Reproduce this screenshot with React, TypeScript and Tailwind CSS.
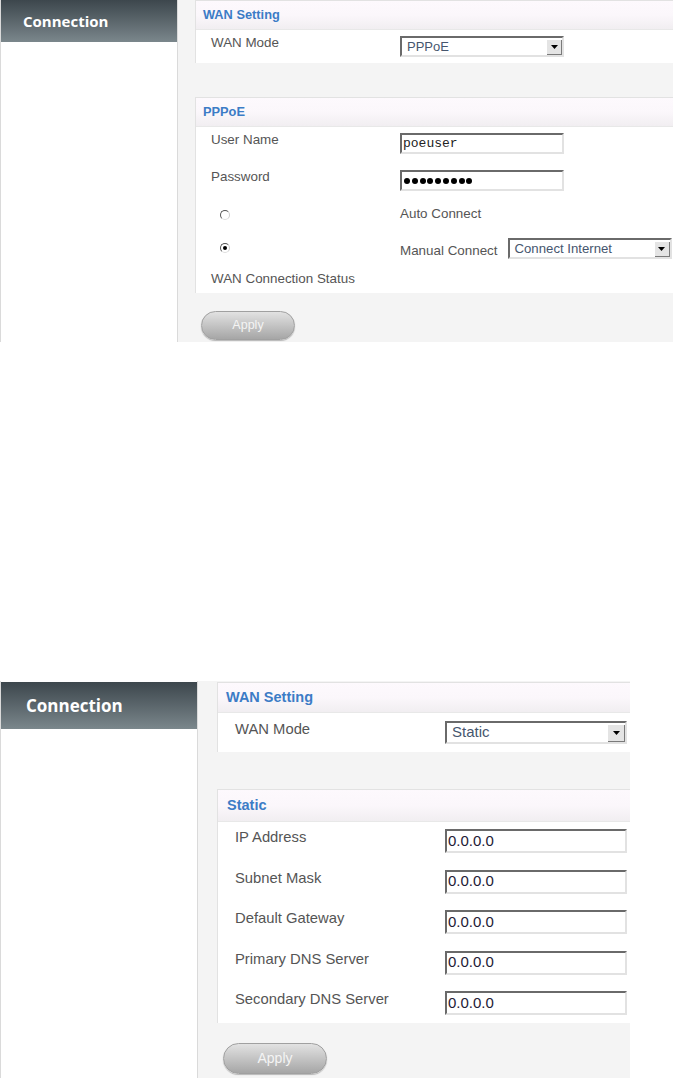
import React from "react";

const labelFont = { fontFamily: '"Liberation Sans", Arial, sans-serif' };

function Arrow({ size = 16, h = 17 }: { size?: number; h?: number }) {
  return (
    <div
      className="flex items-center justify-center border-l border-t border-white bg-[#e4e4e4] shadow-[inset_-1px_-1px_0_#7a7a7a]"
      style={{ width: size, height: h }}
    >
      <svg width="8" height="5" viewBox="0 0 8 5">
        <path d="M0 0 H7 L3.5 4 Z" fill="#000" />
      </svg>
    </div>
  );
}

function Select({ text, w, h, fs }: { text: string; w: number; h: number; fs: number }) {
  return (
    <div
      className="flex shrink-0 items-center justify-between border-2 border-t-[#6a6a6a] border-l-[#6a6a6a] border-b-[#e2e2e2] border-r-[#e2e2e2] bg-white"
      style={{ width: w, height: h }}
    >
      <span className="whitespace-nowrap pl-[5px] text-[#46566e]" style={{ ...labelFont, fontSize: fs }}>
        {text}
      </span>
      <Arrow size={h - 5} h={h - 5} />
    </div>
  );
}

function Input({ children, w, h, className = "" }: { children: React.ReactNode; w: number; h: number; className?: string }) {
  return (
    <div
      className={"flex shrink-0 items-center border-2 border-t-[#6a6a6a] border-l-[#6a6a6a] border-b-[#e2e2e2] border-r-[#e2e2e2] bg-white pl-[1px] " + className}
      style={{ width: w, height: h }}
    >
      {children}
    </div>
  );
}

function Radio({ checked }: { checked?: boolean }) {
  return (
    <div className="flex h-[10px] w-[10px] items-center justify-center rounded-full border border-[#555] border-r-[#ccc] border-b-[#ddd] bg-white">
      {checked && <div className="h-[4px] w-[4px] rounded-full bg-black" />}
    </div>
  );
}

function SideHeader({ h, fs, pl }: { h: number; fs: number; pl: number }) {
  return (
    <div
      className="flex items-center bg-gradient-to-b from-[#3d474d] to-[#7b878c] font-bold text-white"
      style={{ height: h, paddingLeft: pl, fontFamily: '"Open Sans", "Noto Sans", sans-serif', fontSize: fs }}
    >
      Connection
    </div>
  );
}

function CardHeader({ title, h, fs, pl }: { title: string; h: number; fs: number; pl: number }) {
  return (
    <div
      className="flex items-center border-b border-[#e8e8e8] bg-gradient-to-b from-[#fdf9fd] via-[#fbf7fb] to-[#f1eef1] font-bold text-[#3c7cc6]"
      style={{ height: h, paddingLeft: pl, fontSize: fs, ...labelFont }}
    >
      {title}
    </div>
  );
}

function ApplyBtn({ w, h, fs }: { w: number; h: number; fs: number }) {
  return (
    <div
      className="flex items-center justify-center rounded-full border border-[#a0a0a0] bg-gradient-to-b from-[#e2e2e2] via-[#c4c4c4] to-[#a6a6a6] text-[#f4f4f4] shadow-[0_1px_1px_rgba(0,0,0,0.25)]"
      style={{ width: w, height: h, fontSize: fs, ...labelFont }}
    >
      Apply
    </div>
  );
}

function Dots({ n }: { n: number }) {
  return (
    <div className="flex gap-[1.8px] pl-[1px]">
      {Array.from({ length: n }).map((_, i) => (
        <div key={i} className="h-[6px] w-[6px] rounded-full bg-black" />
      ))}
    </div>
  );
}

function TopPanel() {
  return (
    <div className="flex h-[342px] w-[673px] overflow-hidden" style={labelFont}>
      <div className="w-[178px] shrink-0 border-l border-r border-[#dadada] bg-white">
        <SideHeader h={42} fs={15} pl={22} />
      </div>
      <div className="min-w-0 flex-1 bg-[#f4f4f4] pl-[17px]">
        <div className="w-[520px] border-l border-t border-[#e2e2e2]">
          <CardHeader title="WAN Setting" h={29} fs={12.8} pl={7} />
          <div className="flex h-[33px] items-start bg-white pl-[15px] pt-[6px] text-[13.4px] text-[#555]">
            <div className="w-[189px] leading-[14px]">WAN Mode</div>
            <Select text="PPPoE" w={164} h={21} fs={13} />
          </div>
        </div>
        <div className="mt-[34px] w-[520px] border-l border-t border-[#e2e2e2]">
          <CardHeader title="PPPoE" h={29} fs={12.8} pl={7} />
          <div className="h-[166px] bg-white pl-[15px] pt-[6px] text-[13.4px] text-[#555]">
            <div className="flex h-[37px] items-start">
              <div className="w-[189px] leading-[14px]">User Name</div>
              <Input w={164} h={21}>
                <span className="text-[13px] text-[#222]" style={{ fontFamily: '"Liberation Mono", monospace' }}>
                  poeuser
                </span>
              </Input>
            </div>
            <div className="flex h-[37px] items-start">
              <div className="w-[189px] leading-[14px]">Password</div>
              <Input w={164} h={21}>
                <Dots n={9} />
              </Input>
            </div>
            <div className="flex h-[26px] items-start">
              <div className="flex w-[189px] pl-[9px] pt-[3px]">
                <Radio />
              </div>
              <div className="leading-[14px]">Auto Connect</div>
            </div>
            <div className="flex h-[39px] items-start pt-[5px]">
              <div className="flex w-[189px] pl-[9px] pt-[5px]">
                <Radio checked />
              </div>
              <div className="whitespace-nowrap pt-[6px] leading-[14px]">Manual Connect</div>
              <div className="ml-[10px]">
                <Select text="Connect Internet" w={164} h={21} fs={13.2} />
              </div>
            </div>
            <div className="leading-[14px]">WAN Connection Status</div>
          </div>
        </div>
        <div className="ml-[6px] mt-[18px]">
          <ApplyBtn w={94} h={29} fs={12.5} />
        </div>
      </div>
    </div>
  );
}

function BottomPanel() {
  const rows = ["IP Address", "Subnet Mask", "Default Gateway", "Primary DNS Server", "Secondary DNS Server"];
  return (
    <div className="flex h-[397px] w-[630px] overflow-hidden" style={labelFont}>
      <div className="w-[198px] shrink-0 border-l border-r border-[#dadada] bg-white pt-[1px]">
        <SideHeader h={47} fs={17} pl={25} />
      </div>
      <div className="flex-1 bg-[#f4f4f4] pl-[19px] pt-[1px]">
        <div className="border-l border-t border-[#e2e2e2]">
          <CardHeader title="WAN Setting" h={30} fs={14.5} pl={8} />
          <div className="flex h-[39px] items-start bg-white pl-[17px] pt-[8px] text-[14.8px] text-[#555]">
            <div className="w-[210px] leading-[16px]">WAN Mode</div>
            <Select text="Static" w={182} h={23} fs={15} />
          </div>
        </div>
        <div className="mt-[37px] border-l border-t border-[#e2e2e2]">
          <CardHeader title="Static" h={32} fs={14.5} pl={9} />
          <div className="h-[201px] overflow-hidden bg-white pl-[17px] pt-[7px] text-[14.8px] text-[#555]">
            {rows.map((r) => (
              <div key={r} className="flex h-[40.5px] items-start">
                <div className="w-[210px] leading-[16px]">{r}</div>
                <Input w={182} h={24}>
                  <span className="text-[15px] text-[#1e2036]">0.0.0.0</span>
                </Input>
              </div>
            ))}
          </div>
        </div>
        <div className="ml-[6px] mt-[20px]">
          <ApplyBtn w={104} h={31} fs={14} />
        </div>
      </div>
    </div>
  );
}

export default function App() {
  return (
    <div className="h-[1078px] w-[673px] overflow-hidden bg-white">
      <TopPanel />
      <div className="h-[339px]" />
      <BottomPanel />
    </div>
  );
}
